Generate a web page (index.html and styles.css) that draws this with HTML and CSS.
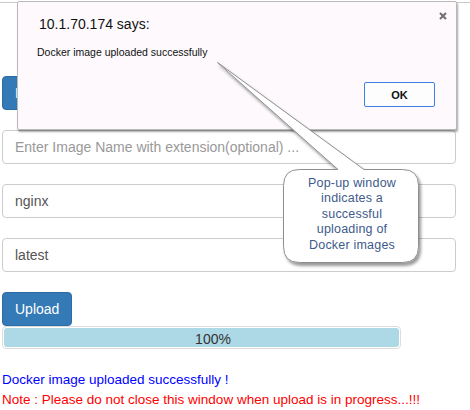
FILE: index.html
```html
<!DOCTYPE html>
<html>
<head>
<meta charset="utf-8">
<link rel="stylesheet" href="styles.css">
</head>
<body>
<div class="topline"></div>
<div class="form">
  <button class="btn btn-browse">Browse</button>
  <div class="input placeholder">Enter Image Name with extension(optional) ...</div>
  <div class="input">nginx</div>
  <div class="input">latest</div>
  <button class="btn btn-upload">Upload</button>
  <div class="progress"><div class="progress-fill" style="width:100%">100%</div></div>
  <div class="msg-ok">Docker image uploaded successfully !</div>
  <div class="msg-note">Note : Please do not close this window when upload is in progress...!!!</div>
</div>

<div class="dialog">
  <svg class="dialog-close" width="8" height="8" viewBox="0 0 8 8"><path d="M1 1 L7 7 M7 1 L1 7" stroke="#6f6f6f" stroke-width="2" fill="none"/></svg>
  <div class="dialog-title">10.1.70.174 says:</div>
  <div class="dialog-msg">Docker image uploaded successfully</div>
  <div class="dialog-actions"><button class="dialog-ok">OK</button></div>
</div>

<svg class="callout-shape" width="470" height="410" viewBox="0 0 470 410">
  <defs>
    <filter id="sh" x="-20%" y="-20%" width="140%" height="140%">
      <feDropShadow dx="2" dy="3" stdDeviation="1.6" flood-color="#000" flood-opacity="0.4"/>
    </filter>
  </defs>
  <path d="M299.5 169.5 L338 169.5 L217.5 62.5 L364 169.5 L402.5 169.5 Q418.5 169.5 418.5 185.5 L418.5 246.5 Q418.5 262.5 402.5 262.5 L299.5 262.5 Q283.5 262.5 283.5 246.5 L283.5 185.5 Q283.5 169.5 299.5 169.5 Z" fill="#fff" stroke="#8e8e8e" stroke-width="1" filter="url(#sh)"/>
</svg>
<div class="callout-text">Pop-up window<br>indicates a<br>successful<br>uploading of<br>Docker images</div>
</body>
</html>
```
FILE: styles.css
```css
html, body {
  margin: 0;
  padding: 0;
  background: #fff;
  width: 470px;
  height: 410px;
  overflow: hidden;
  font-family: "Liberation Sans", Arial, sans-serif;
}
.topline {
  margin-top: 2px;
  height: 0;
  border-top: 1px solid #c9c9c9;
}
.form {
  padding-left: 2px;
  width: 454px;
  display: flex;
  flex-direction: column;
  align-items: flex-start;
}
.btn {
  font-family: "Liberation Sans", Arial, sans-serif;
  font-size: 14px;
  line-height: 20px;
  height: 34px;
  padding: 6px 12px;
  color: #fff;
  background: #337ab7;
  border: 1px solid #2e6da4;
  border-radius: 4px;
  box-sizing: border-box;
}
.btn-browse {
  margin-top: 73px;
}
.input {
  box-sizing: border-box;
  width: 454px;
  height: 34px;
  margin-top: 20px;
  padding: 6px 12px;
  font-size: 14px;
  line-height: 20px;
  color: #555;
  border: 1px solid #ccc;
  border-radius: 4px;
  background: #fff;
}
.input.placeholder {
  color: #999;
}
.btn-upload {
  margin-top: 20px;
}
.progress {
  box-sizing: border-box;
  width: 399px;
  height: 23px;
  padding: 1px;
  border: 1px solid #ddd;
  border-radius: 4px;
  background: #fff;
}
.progress-fill {
  box-sizing: border-box;
  height: 19px;
  padding-top: 4px;
  padding-left: 23px;
  line-height: 15px;
  font-size: 14px;
  color: #333;
  text-align: center;
  background: #add8e6;
  border-radius: 3px;
}
.msg-ok {
  margin-top: 21px;
  font-size: 13.5px;
  line-height: 20px;
  color: #0000ff;
}
.msg-note {
  font-size: 13.5px;
  line-height: 20px;
  color: #ff0000;
  white-space: nowrap;
}
.dialog {
  position: absolute;
  left: 17px;
  top: 1px;
  width: 440px;
  height: 129px;
  box-sizing: border-box;
  background: #fdf9fd;
  border: 1px solid #b9b9b9;
  border-radius: 2px;
  box-shadow: 1px 2px 2px rgba(0, 0, 0, 0.35);
  padding: 13px 21px 0 19px;
  display: flex;
  flex-direction: column;
}
.dialog-close {
  position: absolute;
  top: 10px;
  right: 9px;
}
.dialog-title {
  font-size: 14px;
  line-height: 18px;
  color: #111;
  padding-left: 2px;
}
.dialog-msg {
  margin-top: 13px;
  font-size: 10.5px;
  line-height: 13px;
  color: #111;
}
.dialog-actions {
  margin-top: 23px;
  display: flex;
  justify-content: flex-end;
}
.dialog-ok {
  width: 71px;
  height: 25px;
  box-sizing: border-box;
  background: #fdfdfd;
  border: 1px solid #3d7fe6;
  border-radius: 2px;
  font-family: "Liberation Sans", Arial, sans-serif;
  font-size: 11px;
  font-weight: bold;
  color: #111;
  padding: 0;
}
.callout-shape {
  position: absolute;
  left: 0;
  top: 0;
  overflow: visible;
  pointer-events: none;
}
.callout-text {
  position: absolute;
  left: 283px;
  top: 176px;
  width: 138px;
  text-align: center;
  font-size: 12.5px;
  line-height: 15.4px;
  color: #3e5b8b;
  letter-spacing: 0.2px;
}
```
